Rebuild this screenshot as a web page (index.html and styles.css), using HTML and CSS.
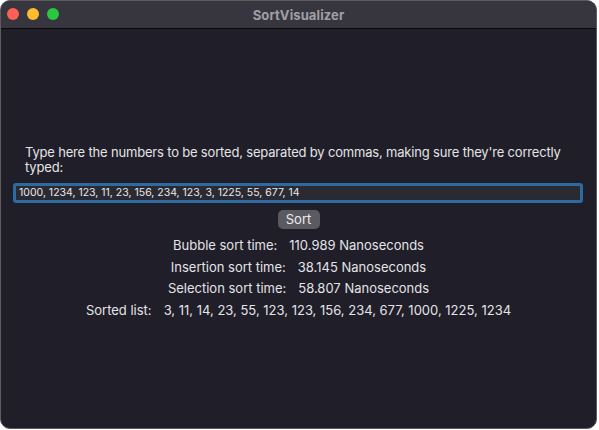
FILE: index.html
```html
<!DOCTYPE html>
<html>
<head>
<meta charset="utf-8">
<link rel="stylesheet" href="styles.css">
</head>
<body>
<div class="window">
  <div class="titlebar">
    <div class="lights">
      <span class="light red"></span>
      <span class="light yellow"></span>
      <span class="light green"></span>
    </div>
    <div class="title">SortVisualizer</div>
  </div>
  <div class="content">
    <p class="prompt">Type here the numbers to be sorted, separated by commas, making sure they're correctly typed:</p>
    <div class="field">1000, 1234, 123, 11, 23, 156, 234, 123, 3, 1225, 55, 677, 14</div>
    <div class="actions"><button class="sort-btn">Sort</button></div>
    <div class="results">
      <div class="row"><span>Bubble sort time:</span><span>110.989 Nanoseconds</span></div>
      <div class="row"><span>Insertion sort time:</span><span>38.145 Nanoseconds</span></div>
      <div class="row"><span>Selection sort time:</span><span>58.807 Nanoseconds</span></div>
      <div class="row"><span>Sorted list:</span><span>3, 11, 14, 23, 55, 123, 123, 156, 234, 677, 1000, 1225, 1234</span></div>
    </div>
  </div>
</div>
</body>
</html>
```

FILE: styles.css
```css
html, body {
  margin: 0;
  padding: 0;
  background: #ffffff;
}
body {
  font-family: Inter, "Noto Sans", sans-serif;
  -webkit-font-smoothing: antialiased;
}
.window {
  width: 597px;
  height: 429px;
  box-sizing: border-box;
  border: 1px solid #5c5b60;
  border-radius: 10px;
  overflow: hidden;
  background: #1f1e29;
  display: flex;
  flex-direction: column;
}
.titlebar {
  height: 27px;
  background: #37363e;
  border-bottom: 1px solid #0a0a0c;
  position: relative;
  display: flex;
  align-items: center;
  justify-content: center;
  flex-shrink: 0;
}
.lights {
  position: absolute;
  left: 6px;
  top: 7px;
  display: flex;
  gap: 8px;
}
.light {
  width: 12px;
  height: 12px;
  border-radius: 50%;
  display: block;
}
.red { background: #fe5f57; }
.yellow { background: #febc2e; }
.green { background: #28c840; }
.title {
  color: #a09ea6;
  font-weight: 700;
  font-size: 13px;
  letter-spacing: 0.1px;
}
.content {
  padding: 116px 12px 0 12px;
  color: #e4e4e6;
  font-size: 13px;
}
.prompt {
  margin: 0 0 8px 12px;
  line-height: 15px;
  letter-spacing: -0.18px;
}
.field {
  height: 20px;
  box-sizing: border-box;
  border: 3px solid #2c6aa0;
  border-radius: 3px;
  background: #2b2a33;
  color: #e8e8ea;
  font-size: 10.5px;
  line-height: 14px;
  padding-left: 3px;
  width: 570px;
}
.actions {
  display: flex;
  justify-content: center;
  margin-top: 7px;
}
.sort-btn {
  font-family: inherit;
  font-size: 13px;
  color: #ececee;
  background: #5b5a61;
  border: none;
  border-radius: 5px;
  height: 19px;
  width: 42px;
  padding: 0;
  line-height: 19px;
}
.results {
  margin-top: 6px;
  display: flex;
  flex-direction: column;
  align-items: center;
}
.row {
  display: flex;
  gap: 12px;
  height: 21.5px;
  line-height: 21.5px;
}
```
